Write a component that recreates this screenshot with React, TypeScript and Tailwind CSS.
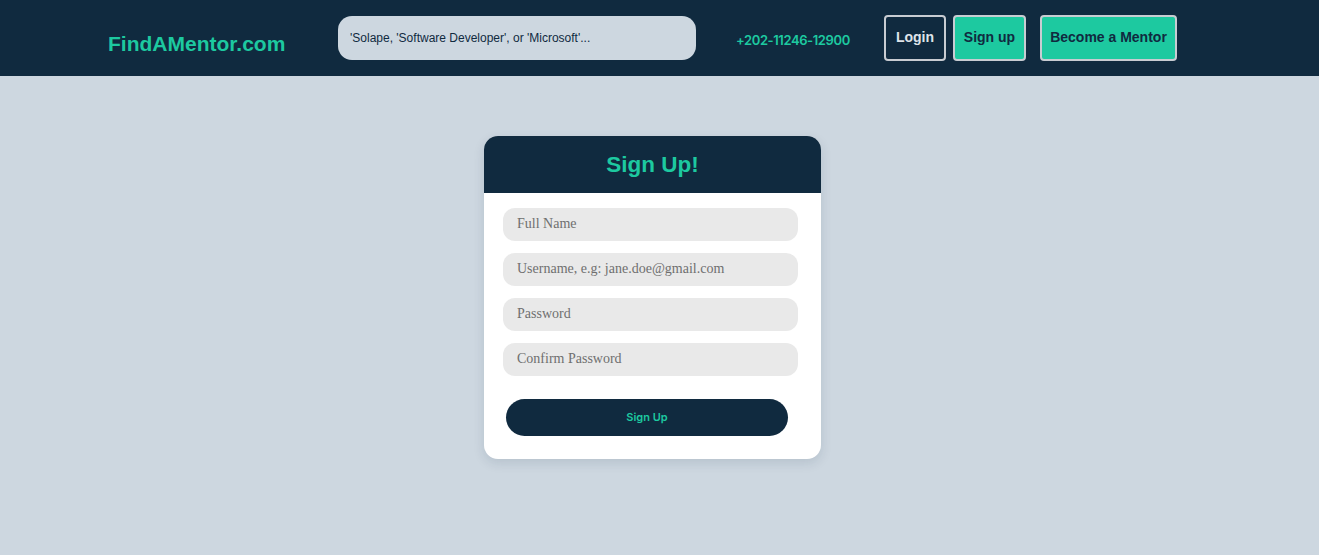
export default function App() {
  return (
    <div className="min-h-[555px] bg-[#cdd7e0] font-['Liberation_Sans',Arial,sans-serif]">
      {/* Navbar */}
      <header className="h-[76px] bg-[#102a3f] flex items-center">
        <div className="w-[390px] pl-[108px] pt-[11px]">
          <a className="text-[21px] font-bold text-[#1dc9a0]">FindAMentor.com</a>
        </div>
        <div className="w-[358px] ml-[-52px] -mt-[1px]">
          <input
            type="text"
            placeholder="'Solape, 'Software Developer', or 'Microsoft'..."
            className="w-full h-[44px] rounded-[14px] bg-[#cdd7e0] px-3 pt-[1px] text-[12px] text-[#102a3f] placeholder:text-[#102a3f] outline-none"
          />
        </div>
        <span className="ml-[40px] mt-[6px] w-[111px] whitespace-nowrap text-[13px] tracking-[-0.4px] font-semibold text-[#1dc9a0] font-['Inter',sans-serif]">+202-11246-12900</span>
        <div className="ml-[37px] flex items-center -mt-[1px]">
          <button className="h-[46px] w-[62px] rounded-[4px] border-2 border-[#c8ccd2] bg-[#102a3f] text-[14px] font-bold text-[#dfe4ea]">
            Login
          </button>
          <button className="ml-[7px] h-[46px] w-[73px] rounded-[4px] border-2 border-[#c8ccd2] bg-[#1dc9a0] text-[14px] font-bold text-[#102a3f]">
            Sign up
          </button>
          <button className="ml-[14px] h-[46px] w-[137px] rounded-[4px] border-2 border-[#c8ccd2] bg-[#1dc9a0] text-[14px] font-bold text-[#102a3f]">
            Become a Mentor
          </button>
        </div>
      </header>

      {/* Sign up card */}
      <main className="flex justify-center pt-[60px] pr-[14px]">
        <div className="w-[337px] rounded-[14px] bg-white overflow-hidden shadow-[0_4px_12px_rgba(16,42,63,0.12)]">
          <div className="h-[57px] bg-[#102a3f] flex items-center justify-center">
            <h2 className="text-[22.5px] font-bold text-[#1dc9a0]">Sign Up!</h2>
          </div>
          <form className="px-[19px] pt-[15px] pb-[23px] flex flex-col" onSubmit={e => e.preventDefault()}>
            <div className="flex flex-col gap-[12px] pr-[4px]">
              {['Full Name', 'Username, e.g: jane.doe@gmail.com', 'Password', 'Confirm Password'].map(p => (
                <input
                  key={p}
                  type={p.includes('Password') ? 'password' : 'text'}
                  placeholder={p}
                  className="h-[33px] w-full rounded-[12px] bg-[#e9e9e9] px-[14px] pb-[2px] text-[14px] font-['Liberation_Serif',serif] text-[#555] placeholder:text-[#6f6f6f] outline-none"
                />
              ))}
            </div>
            <button className="mt-[23px] ml-[3px] h-[37px] w-[282px] rounded-full bg-[#102a3f] text-[11px] font-semibold text-[#1dc9a0] font-['Inter',sans-serif]">
              Sign Up
            </button>
          </form>
        </div>
      </main>
    </div>
  );
}
